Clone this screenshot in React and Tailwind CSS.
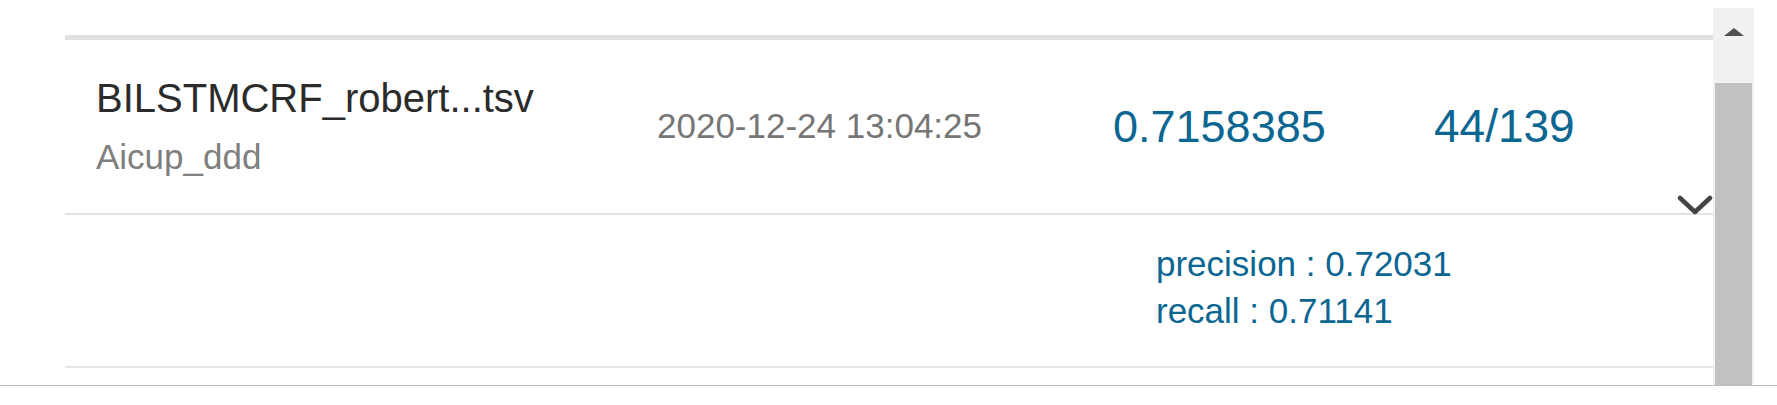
import React from "react";

const font = { fontFamily: '"Liberation Sans", Arial, sans-serif' };

function Scrollbar() {
  return (
    <div className="w-[41px] h-full flex flex-col bg-[#f1f1f1]">
      <div className="h-[75px] flex justify-center pt-[20px]">
        <div className="w-0 h-0 border-l-[10px] border-r-[10px] border-b-[8px] border-l-transparent border-r-transparent border-b-[#505050]" />
      </div>
      <div className="flex-1 mx-[2px] bg-[#c1c1c1]" />
    </div>
  );
}

export default function App() {
  return (
    <div className="w-full h-[405px] bg-white" style={font}>
      <div className="h-[386px] border-b border-[#bdbdbd] pt-[8px] flex">
        <div className="flex-1 pl-[65px] pt-[27px]">
          <div className="border-t-[5px] border-[#e0e0e0]">
            {/* Submission row */}
            <div className="relative h-[175px] border-b-2 border-[#e3e3e3] flex items-center">
              <div className="w-[592px] pl-[31px] pt-[2px]">
                <div className="text-[40px] leading-[58px] text-[#2b2b2b]">
                  BILSTMCRF_robert...tsv
                </div>
                <div className="text-[35px] leading-[60px] text-[#7f7f7f]">
                  Aicup_ddd
                </div>
              </div>
              <div className="w-[456px] text-[35px] text-[#767676]">
                2020-12-24 13:04:25
              </div>
              <div className="w-[321px] text-[45px] text-[#0b6691]">
                0.7158385
              </div>
              <div className="text-[46px] text-[#0b6691]">44/139</div>
              <svg
                className="absolute right-0 bottom-[-3px]"
                width="36"
                height="22"
                viewBox="0 0 36 22"
                fill="none"
              >
                <path
                  d="M3 4 L18 18 L33 4"
                  stroke="#444"
                  strokeWidth="4.5"
                  strokeLinecap="round"
                  strokeLinejoin="round"
                />
              </svg>
            </div>
            {/* Expanded details */}
            <div className="h-[153px] border-b-2 border-[#e6e6e6] pl-[1091px] pt-[25px]">
              <div className="text-[35px] leading-[47px] text-[#0b6691]">
                precision : 0.72031
              </div>
              <div className="text-[35px] leading-[47px] text-[#0b6691]">
                recall : 0.71141
              </div>
            </div>
          </div>
        </div>
        <Scrollbar />
        <div className="w-[23px]" />
      </div>
    </div>
  );
}
